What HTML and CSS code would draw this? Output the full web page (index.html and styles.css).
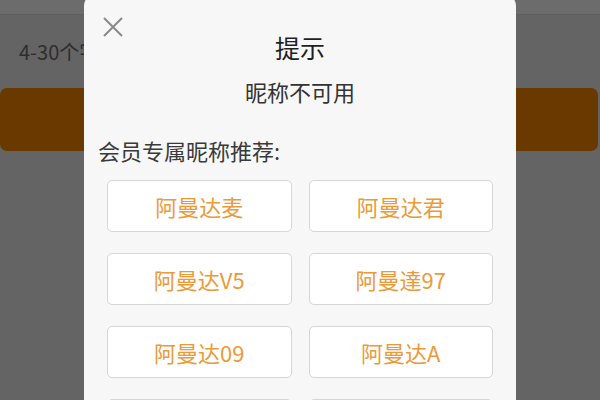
FILE: index.html
```html
<!DOCTYPE html>
<html lang="zh-CN">
<head>
  <meta charset="UTF-8">
  <meta name="viewport" content="width=device-width, initial-scale=1.0">
  <title>修改昵称</title>
  <link rel="stylesheet" href="styles.css">
</head>
<body>
  <div class="page">
    <div class="page-top"></div>
    <p class="page-hint">4-30个字符</p>
    <button class="page-submit"></button>
  </div>

  <div class="dialog">
    <button class="dialog-close" aria-label="关闭">
      <svg width="20" height="20" viewBox="0 0 20 20">
        <path d="M1 1 L19 19 M19 1 L1 19" stroke="#8a8a8a" stroke-width="2" fill="none"/>
      </svg>
    </button>
    <h1 class="dialog-title">提示</h1>
    <p class="dialog-msg">昵称不可用</p>
    <p class="dialog-label">会员专属昵称推荐:</p>
    <div class="name-grid">
      <button class="name-option">阿曼达麦</button>
      <button class="name-option">阿曼达君</button>
      <button class="name-option">阿曼达V5</button>
      <button class="name-option">阿曼達97</button>
      <button class="name-option">阿曼达09</button>
      <button class="name-option">阿曼达A</button>
      <button class="name-option"></button>
      <button class="name-option"></button>
    </div>
  </div>
</body>
</html>
```

FILE: styles.css
```css
* {
  margin: 0;
  padding: 0;
  box-sizing: border-box;
}

body {
  font-family: "Noto Sans CJK SC", "Noto Sans", sans-serif;
  background-color: #646464;
  width: 600px;
  height: 400px;
  overflow: hidden;
  position: relative;
}

/* dimmed page behind the dialog */
.page-top {
  height: 15px;
  background: #6c6c6c;
  border-bottom: 1px solid #5f5f5f;
}

.page-hint {
  padding-left: 19px;
  margin-top: 23px;
  font-size: 20px;
  line-height: 28px;
  color: #2e2e2e;
  white-space: nowrap;
}

.page-submit {
  display: block;
  width: 598px;
  height: 63px;
  margin-top: 22px;
  border: none;
  border-radius: 7px;
  background: #6a3900;
}

/* dialog */
.dialog {
  position: absolute;
  left: 84px;
  top: -6px;
  width: 432px;
  height: 420px;
  background: #f7f7f7;
  border-radius: 12px;
  padding: 37px 23px 0;
}

.dialog-close {
  position: absolute;
  left: 19px;
  top: 23px;
  width: 20px;
  height: 20px;
  border: none;
  background: none;
  display: flex;
}

.dialog-title {
  text-align: center;
  font-size: 25px;
  font-weight: 400;
  line-height: 32px;
  color: #1f1f1f;
}

.dialog-msg {
  text-align: center;
  margin-top: 14px;
  font-size: 22px;
  line-height: 28px;
  color: #333;
}

.dialog-label {
  margin: 31px 0 0 -9px;
  font-size: 22px;
  line-height: 28px;
  color: #3a3a3a;
}

.name-grid {
  margin-top: 16px;
  display: grid;
  grid-template-columns: 1fr 1fr;
  column-gap: 17px;
  row-gap: 21px;
}

.name-option {
  height: 52px;
  background: #fff;
  border: 1.5px solid #d6d6d6;
  border-radius: 5px;
  font-family: inherit;
  font-size: 22px;
  color: #ec9a38;
}
```
